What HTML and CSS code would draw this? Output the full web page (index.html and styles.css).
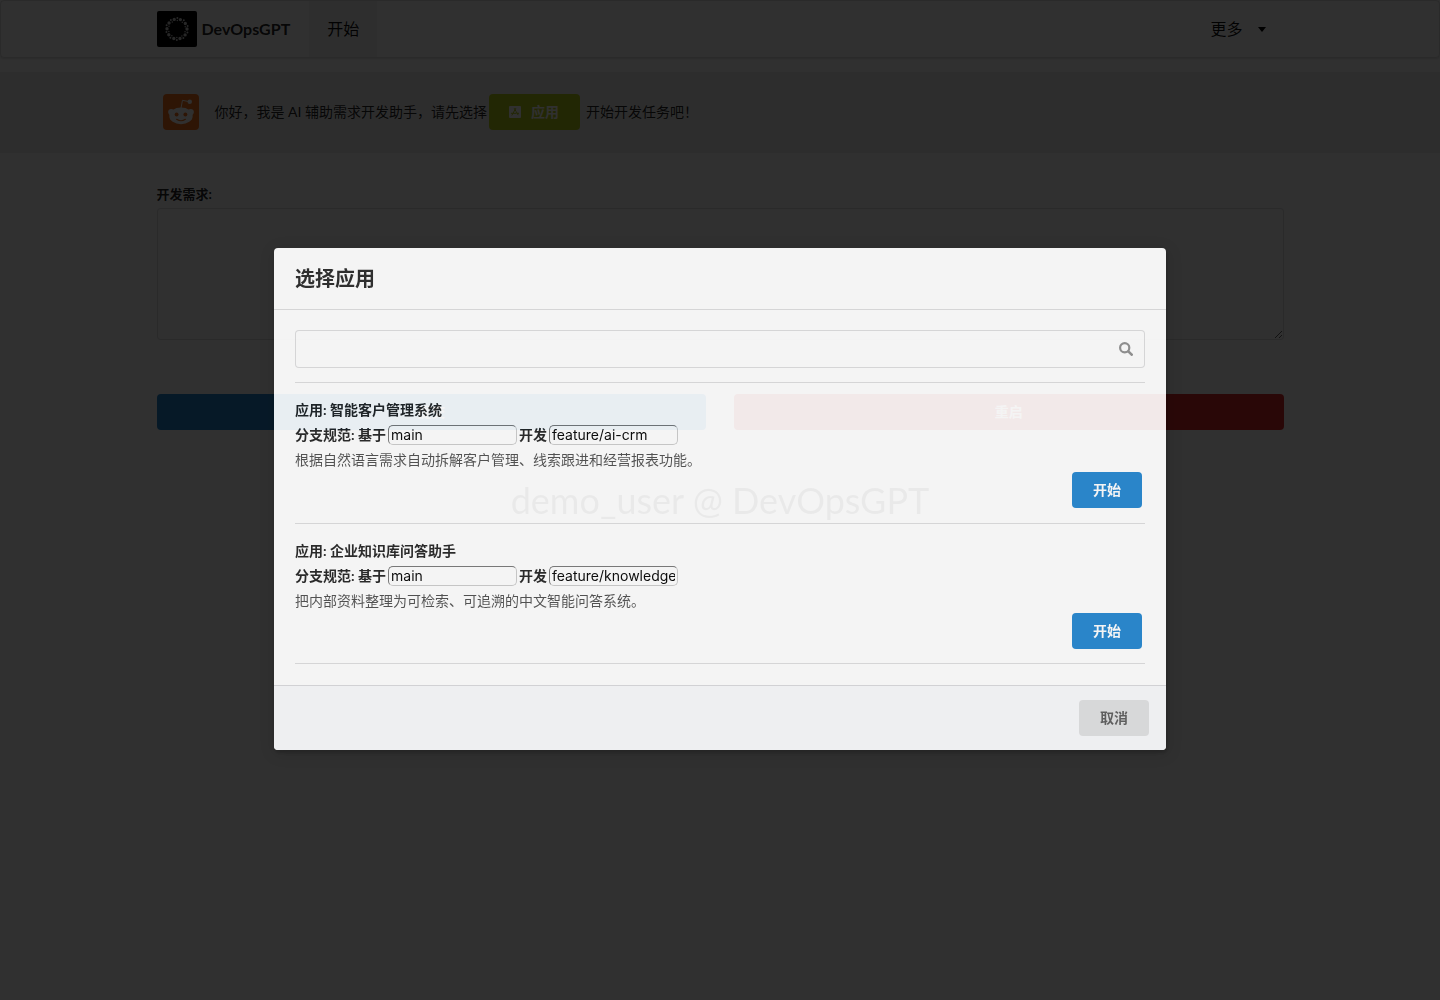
FILE: index.html
```html
<!DOCTYPE html>
<html lang="zh-CN">
<head>
<meta charset="UTF-8">
<meta name="viewport" content="width=device-width, initial-scale=1.0">
<title>DevOpsGPT</title>
<link rel="stylesheet" href="styles.css">
</head>
<body>

<nav class="menu">
    <div class="container menu-inner">
        <a href="#" class="brand">
            <svg class="logo" viewBox="0 0 40 36" aria-hidden="true">
                <rect width="40" height="36" rx="2" fill="#000"/>
                <g fill="none" stroke="#ccc" stroke-linecap="round">
                    <circle cx="20" cy="18" r="10" stroke-width="3.400" stroke-dasharray="0 6.283"/>
                    <circle cx="20" cy="18" r="11" stroke-width="2" stroke-dasharray="0 6.912" stroke-dashoffset="3.4"/>
                    <circle cx="20" cy="18" r="8.500" stroke-width="1.500" stroke-dasharray="0 5.341" stroke-dashoffset="2.6"/>
                </g>
            </svg>
            <span>DevOpsGPT</span>
        </a>
        <a href="#" class="item active">开始</a>
        <button type="button" class="item more">更多
            <svg class="caret" viewBox="0 0 8 5" aria-hidden="true"><path d="M0 0h8L4 5z"/></svg>
        </button>
    </div>
</nav>

<div class="banner">
    <div class="container banner-inner">
        <svg class="reddit" viewBox="0 0 37 37" aria-hidden="true">
            <rect width="37" height="37" rx="4" fill="#f2711c"/>
            <g fill="#fff">
                <circle cx="8.500" cy="18.500" r="3.200"/>
                <circle cx="28.500" cy="18.500" r="3.200"/>
                <ellipse cx="18.500" cy="22.500" rx="12" ry="8.500"/>
                <circle cx="27.500" cy="8" r="2.300"/>
            </g>
            <path d="M18.500 14.500l1.500-8 7.500 1.500" fill="none" stroke="#fff" stroke-width="1"/>
            <circle cx="14" cy="21" r="2" fill="#f2711c"/>
            <circle cx="23" cy="21" r="2" fill="#f2711c"/>
            <path d="M14 26q4.500 3 9 0" fill="none" stroke="#f2711c" stroke-width="1.200" stroke-linecap="round"/>
        </svg>
        <span>你好，我是 AI 辅助需求开发助手，请先选择</span>
        <button type="button" class="button olive">
            <svg class="app-icon" viewBox="0 0 12 12" aria-hidden="true">
                <rect width="12" height="12" rx="1" fill="#fff"/>
                <path d="M5.300 2.500L6.800 5M6.700 2.500L4 7.300M2.300 7.300h4.500M8 7.300h1.700M7.300 5.800l1.700 3M3.400 8.400l-.4.700" fill="none" stroke="#b5cc18" stroke-width="1" stroke-linecap="round"/>
            </svg>
            应用
        </button>
        <span>开始开发任务吧！</span>
    </div>
</div>

<main class="container">
    <form class="form">
        <label for="requirement">开发需求:</label>
        <textarea id="requirement" name="requirement"></textarea>
        <div class="form-buttons">
            <button type="button" class="button primary">提交</button>
            <button type="button" class="button red">重启</button>
        </div>
    </form>
</main>

<div class="watermark">demo_user @ DevOpsGPT</div>

<div class="dimmer">
    <div class="modal" role="dialog" aria-labelledby="modal-title">
        <h2 class="modal-header" id="modal-title">选择应用</h2>
        <div class="modal-content">
            <div class="search">
                <input type="text" class="search-input" aria-label="搜索应用">
                <svg class="search-icon" viewBox="0 0 14 14" aria-hidden="true">
                    <circle cx="5.700" cy="5.700" r="4.600" fill="none" stroke="#222" stroke-width="2.200"/>
                    <path d="M9.300 9.300l3.400 3.400" stroke="#222" stroke-width="2.600" stroke-linecap="round"/>
                </svg>
            </div>

            <div class="app">
                <div class="app-name">应用: 智能客户管理系统</div>
                <div class="app-branch">
                    <label for="base-1">分支规范: 基于</label>
                    <input type="text" id="base-1" value="main">
                    <label for="feature-1">开发</label>
                    <input type="text" id="feature-1" value="feature/ai-crm">
                </div>
                <div class="app-desc">根据自然语言需求自动拆解客户管理、线索跟进和经营报表功能。</div>
                <button type="button" class="button primary">开始</button>
            </div>

            <div class="app">
                <div class="app-name">应用: 企业知识库问答助手</div>
                <div class="app-branch">
                    <label for="base-2">分支规范: 基于</label>
                    <input type="text" id="base-2" value="main">
                    <label for="feature-2">开发</label>
                    <input type="text" id="feature-2" value="feature/knowledge-qa">
                </div>
                <div class="app-desc">把内部资料整理为可检索、可追溯的中文智能问答系统。</div>
                <button type="button" class="button primary">开始</button>
            </div>
        </div>
        <div class="modal-actions">
            <button type="button" class="button">取消</button>
        </div>
    </div>
</div>

</body>
</html>
```

FILE: styles.css
```css
* {
    box-sizing: border-box;
}

body {
    margin: 0;
    background-color: #fff;
    color: rgba(0, 0, 0, 0.87);
    font-family: Lato, "Noto Sans CJK SC", sans-serif;
    font-size: 14px;
    line-height: 20px;
}

.container {
    max-width: 1127px;
    margin: 0 auto;
}

/* top menu */
.menu {
    border: 1px solid rgba(34, 36, 38, 0.15);
    border-radius: 4px;
    box-shadow: 0 1px 2px 0 rgba(34, 36, 38, 0.15);
    margin-bottom: 14px;
}

.menu-inner {
    display: flex;
    height: 56px;
}

.brand {
    display: flex;
    align-items: center;
    gap: 5px;
    padding-right: 19px;
    color: rgba(0, 0, 0, 0.87);
    font-size: 16px;
    font-weight: bold;
    text-decoration: none;
}

.logo {
    width: 40px;
    height: 36px;
}

.item {
    display: flex;
    align-items: center;
    padding: 0 18px;
    border: none;
    background: none;
    color: rgba(0, 0, 0, 0.95);
    font-family: inherit;
    font-size: 16px;
    line-height: 20px;
    text-decoration: none;
}

.item.active {
    background-color: rgba(0, 0, 0, 0.05);
}

.more {
    margin-left: auto;
    gap: 15px;
}

.caret {
    width: 8px;
    height: 5px;
}

/* greeting */
.banner {
    padding: 22px 0 23px;
    background-color: #f0f0f0;
}

.banner-inner {
    display: flex;
    align-items: center;
    padding-left: 6px;
}

.reddit {
    width: 36px;
    height: 36px;
    margin-right: 16px;
}

.button {
    height: 36px;
    padding: 0 21px;
    border: none;
    border-radius: 4px;
    background-color: #e0e1e2;
    color: rgba(0, 0, 0, 0.6);
    font-family: inherit;
    font-size: 14px;
    font-weight: bold;
    line-height: 14px;
    cursor: pointer;
}

.button.primary {
    background-color: #2185d0;
    color: #fff;
}

.button.red {
    background-color: #db2828;
    color: #fff;
}

.button.olive {
    display: flex;
    align-items: center;
    gap: 10px;
    margin: 0 6px 0 2px;
    padding: 0 21px 0 20px;
    background-color: #b5cc18;
    color: #fff;
}

.app-icon {
    width: 12px;
    height: 12px;
}

/* requirement form */
.form {
    padding-top: 31px;
}

.form label {
    display: block;
    margin-bottom: 4px;
    font-size: 13px;
    font-weight: bold;
}

.form textarea {
    display: block;
    width: 100%;
    height: 132px;
    border: 1px solid rgba(34, 36, 38, 0.15);
    border-radius: 4px;
    background-color: #fff;
    resize: vertical;
}

.form-buttons {
    display: grid;
    grid-template-columns: 1fr 1fr;
    gap: 28px;
    margin-top: 54px;
}

.watermark {
    position: fixed;
    inset: 0;
    display: flex;
    align-items: center;
    justify-content: center;
    color: #222;
    font-size: 36px;
    pointer-events: none;
}

/* modal */
.dimmer {
    position: fixed;
    inset: 0;
    display: flex;
    align-items: center;
    justify-content: center;
    padding-bottom: 2px;
    background-color: rgba(0, 0, 0, 0.85);
    opacity: 0.955;
}

.modal {
    width: 892px;
    max-width: 95%;
    border-radius: 4px;
    background-color: #fff;
    box-shadow: 1px 3px 3px 0 rgba(0, 0, 0, 0.2), 1px 3px 15px 2px rgba(0, 0, 0, 0.2);
    overflow: hidden;
    opacity: 0.95;
}

.modal-header {
    margin: 0;
    padding: 18px 21px;
    border-bottom: 1px solid rgba(34, 36, 38, 0.15);
    color: rgba(0, 0, 0, 0.85);
    font-size: 20px;
    line-height: 25px;
}

.modal-content {
    padding: 20px 21px 21px;
}

.search {
    position: relative;
    margin-bottom: 14px;
}

.search-input {
    display: block;
    width: 100%;
    height: 38px;
    padding: 0 38px 0 14px;
    border: 1px solid rgba(34, 36, 38, 0.15);
    border-radius: 4px;
    background-color: #fff;
    font-family: inherit;
    font-size: 14px;
}

.search-icon {
    position: absolute;
    top: 12px;
    right: 12px;
    width: 14px;
    height: 14px;
    opacity: 0.5;
}

.app {
    display: flex;
    flex-direction: column;
    padding: 14px 0;
    border-top: 1px solid rgba(34, 36, 38, 0.15);
    line-height: 25px;
}

.app + .app {
    margin-top: 1px;
}

.app:last-child {
    border-bottom: 1px solid rgba(34, 36, 38, 0.15);
}

.app-name,
.app-branch {
    font-weight: bold;
}

.app-branch {
    display: flex;
    align-items: center;
    gap: 2px;
}

.app-branch input {
    width: 129px;
    height: 20px;
    padding: 0 2px;
    border: 1px solid;
    border-color: #767676 #ccc #ccc #767676;
    border-radius: 5px;
    background-color: #fff;
    color: #000;
    font-family: Inter, sans-serif;
    font-size: 14px;
}

.app-desc {
    color: rgba(0, 0, 0, 0.7);
}

.app .button {
    align-self: flex-end;
    margin-right: 3px;
}

.modal-actions {
    display: flex;
    justify-content: flex-end;
    padding: 14px 17px;
    border-top: 1px solid rgba(34, 36, 38, 0.15);
    background-color: #f9fafc;
}
```
